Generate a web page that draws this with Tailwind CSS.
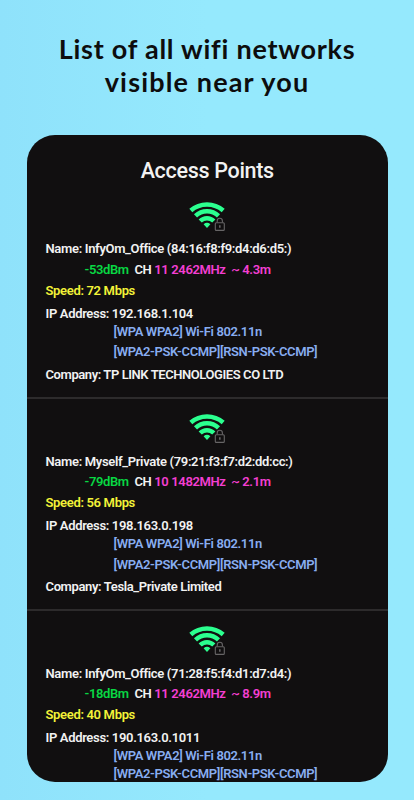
<!DOCTYPE html>
<html lang="en">
<head>
    <meta charset="UTF-8">
    <meta name="viewport" content="width=device-width, initial-scale=1.0">
    <title>Access Points</title>
    <script src="https://cdn.jsdelivr.net/npm/@tailwindcss/browser@4"></script>
</head>
<body class="h-[800px] overflow-hidden bg-linear-to-r from-[#8fe2fb] to-[#95e9fd] to-50%">
<!-- Shared icon -->
<svg class="hidden">
    <symbol id="wifi-lock" viewBox="0 0 36 30">
        <g fill="none" stroke="#2bff8f" stroke-width="4.5">
            <path d="M1.8 8.5C11 0.4 25 0.4 34.2 8.5"/>
            <path d="M6.5 13.9C13 7.8 23 7.8 29.5 13.9"/>
            <path d="M11.2 19C15 15.2 21 15.2 24.8 19"/>
        </g>
        <path d="M14.6 22.2Q18 19.4 21.4 22.2L18 26Z" fill="#2bff8f"/>
        <g fill="none" stroke="#676566" stroke-width="1.1">
            <rect x="26.3" y="20.8" width="9" height="7.6" rx="1"/>
            <path d="M28.2 20.5V19a2.6 2.7 0 0 1 5.2 0v1.5"/>
        </g>
        <path d="M30.2 23.3h1.3v2.5h-1.3z" fill="#777576"/>
    </symbol>
</svg>

<div class="w-[414px] pt-[32px]">
    <h1 class="text-center font-['Lato'] text-[27px] leading-[33px] font-bold tracking-[0.75px] text-[#0d0d0e]">List of all wifi networks<br><span class="tracking-[1.15px]">visible near you</span></h1>

    <!-- Phone card -->
    <main class="mt-[37px] ml-[27px] h-[646.5px] w-[360.5px] overflow-hidden rounded-[28px] bg-[#110f10] font-['Roboto',sans-serif] text-[13px] leading-5 font-semibold tracking-[-0.33px] text-[#f2f2f2] [&_p]:whitespace-pre">
        <h2 class="h-[63px] pt-[23px] text-center text-[21.5px] leading-[26px] font-medium tracking-[-0.3px]">Access Points</h2>

        <section class="h-[201px] border-b-2 border-[#2d2b2c] pt-1 pl-[18.5px]">
            <svg class="ml-[143.5px] h-[30px] w-9"><use href="#wifi-lock"/></svg>
            <p class="mt-[7px]">Name: InfyOm_Office (84:16:f8:f9:d4:d6:d5:)</p>
            <p class="mt-px ml-[39px] tracking-[-0.37px]"><span class="text-[#08d743]">-53dBm</span>  CH <span class="text-[#f43fd2]">11 2462MHz  ~ 4.3m</span></p>
            <p class="mt-px text-[#f3f338]">Speed: 72 Mbps</p>
            <p class="mt-[3px]">IP Address: 192.168.1.104</p>
            <p class="-mt-[2px] ml-[68px] tracking-[-0.37px] text-[#88adf0]">[WPA WPA2] Wi-Fi 802.11n</p>
            <p class="ml-[68px] tracking-[-0.37px] text-[#88adf0]">[WPA2-PSK-CCMP][RSN-PSK-CCMP]</p>
            <p class="mt-[3px] tracking-[-0.42px]">Company: TP LINK TECHNOLOGIES CO LTD</p>
        </section>

        <section class="h-[212px] border-b-2 border-[#2d2b2c] pt-[15px] pl-[18.5px]">
            <svg class="ml-[143.5px] h-[30px] w-9"><use href="#wifi-lock"/></svg>
            <p class="mt-2">Name: Myself_Private (79:21:f3:f7:d2:dd:cc:)</p>
            <p class="ml-[39px] tracking-[-0.37px]"><span class="text-[#08d743]">-79dBm</span>  CH <span class="text-[#f43fd2]">10 1482MHz  ~ 2.1m</span></p>
            <p class="mt-px text-[#f3f338]">Speed: 56 Mbps</p>
            <p class="mt-[3px]">IP Address: 198.163.0.198</p>
            <p class="-mt-[2px] ml-[68px] tracking-[-0.37px] text-[#88adf0]">[WPA WPA2] Wi-Fi 802.11n</p>
            <p class="mt-px ml-[68px] tracking-[-0.37px] text-[#88adf0]">[WPA2-PSK-CCMP][RSN-PSK-CCMP]</p>
            <p class="mt-[2px] tracking-[-0.37px]">Company: Tesla_Private Limited</p>
        </section>

        <section class="pt-[15px] pl-[18.5px]">
            <svg class="ml-[143.5px] h-[30px] w-9"><use href="#wifi-lock"/></svg>
            <p class="mt-2">Name: InfyOm_Office (71:28:f5:f4:d1:d7:d4:)</p>
            <p class="ml-[39px] tracking-[-0.37px]"><span class="text-[#08d743]">-18dBm</span>  CH <span class="text-[#f43fd2]">11 2462MHz  ~ 8.9m</span></p>
            <p class="mt-px text-[#f3f338]">Speed: 40 Mbps</p>
            <p class="mt-[3px]">IP Address: 190.163.0.1011</p>
            <p class="-mt-[2px] ml-[68px] tracking-[-0.37px] text-[#88adf0]">[WPA WPA2] Wi-Fi 802.11n</p>
            <p class="-mt-[2px] ml-[68px] tracking-[-0.37px] text-[#88adf0]">[WPA2-PSK-CCMP][RSN-PSK-CCMP]</p>
        </section>
    </main>
</div>
</body>
</html>
